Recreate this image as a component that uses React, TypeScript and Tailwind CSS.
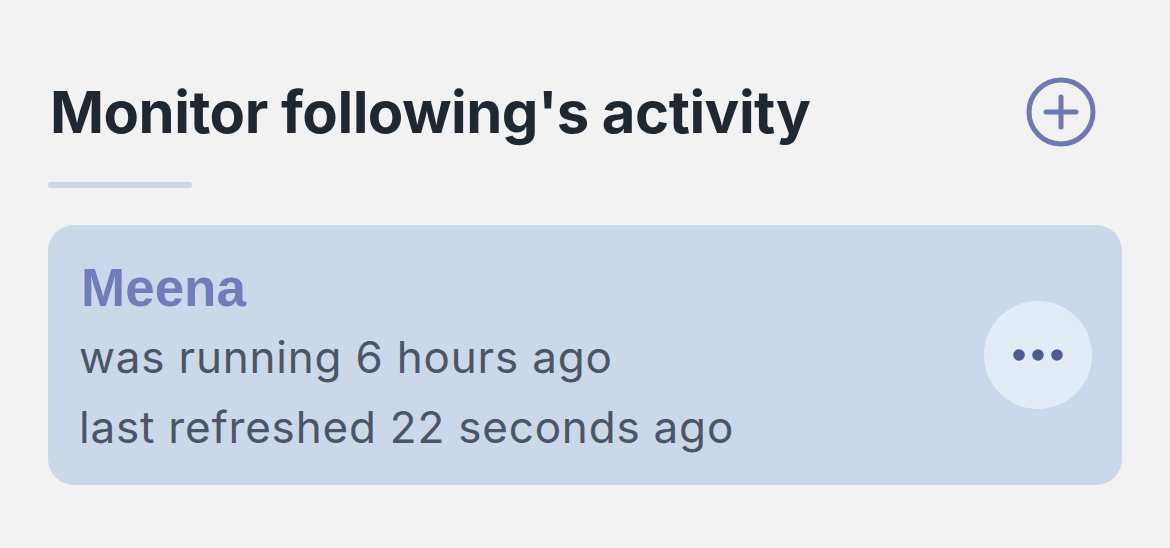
const App = () => {
    return (
        <main className="min-h-[548px] w-[1170px] bg-[#f2f2f2] px-[48px] pt-[74px] font-['Inter',sans-serif]">
            <header className="flex items-center justify-between">
                <h1 className="pl-[2px] text-[58px] font-bold leading-[76px] tracking-[-0.5px] text-[#1f2730]">
                    Monitor following's activity
                </h1>
                {/* add */}
                <button className="mr-[26px] flex h-[70px] w-[70px] items-center justify-center">
                    <svg width="70" height="70" viewBox="0 0 70 70" fill="none">
                        <circle cx="35" cy="35" r="32" stroke="#6d79b1" strokeWidth="5" />
                        <path d="M35 20v30M20 35h30" stroke="#6d79b1" strokeWidth="5" strokeLinecap="round" />
                    </svg>
                </button>
            </header>
            <div className="mt-[32px] h-[6px] w-[144px] rounded-full bg-[#cdd7e8]" />

            <section className="mt-[37px] flex h-[260px] items-center justify-between rounded-[26px] bg-[#cbd8e9] pl-[33px] pr-[30px]">
                <div className="flex flex-col self-start pt-[33px]">
                    <h2 className="font-['Liberation_Sans',sans-serif] text-[53px] font-bold leading-[59px] text-[#6f7dbb]">
                        Meena
                    </h2>
                    <p className="-ml-[2px] mt-[5px] text-[44px] leading-[70px] tracking-[0.8px] text-[#4b5565]">
                        was running 6 hours ago
                    </p>
                    <p className="-ml-[2px] text-[44px] leading-[70px] tracking-[0.8px] text-[#4b5565]">
                        last refreshed 22 seconds ago
                    </p>
                </div>
                {/* options */}
                <button className="flex h-[108px] w-[108px] items-center justify-center rounded-full bg-[#e3ebf6]">
                    <svg width="50" height="14" viewBox="0 0 50 14" fill="#4f5a94">
                        <circle cx="6" cy="7" r="5.8" />
                        <circle cx="25" cy="7" r="5.8" />
                        <circle cx="44" cy="7" r="5.8" />
                    </svg>
                </button>
            </section>
        </main>
    );
};

export default App;
